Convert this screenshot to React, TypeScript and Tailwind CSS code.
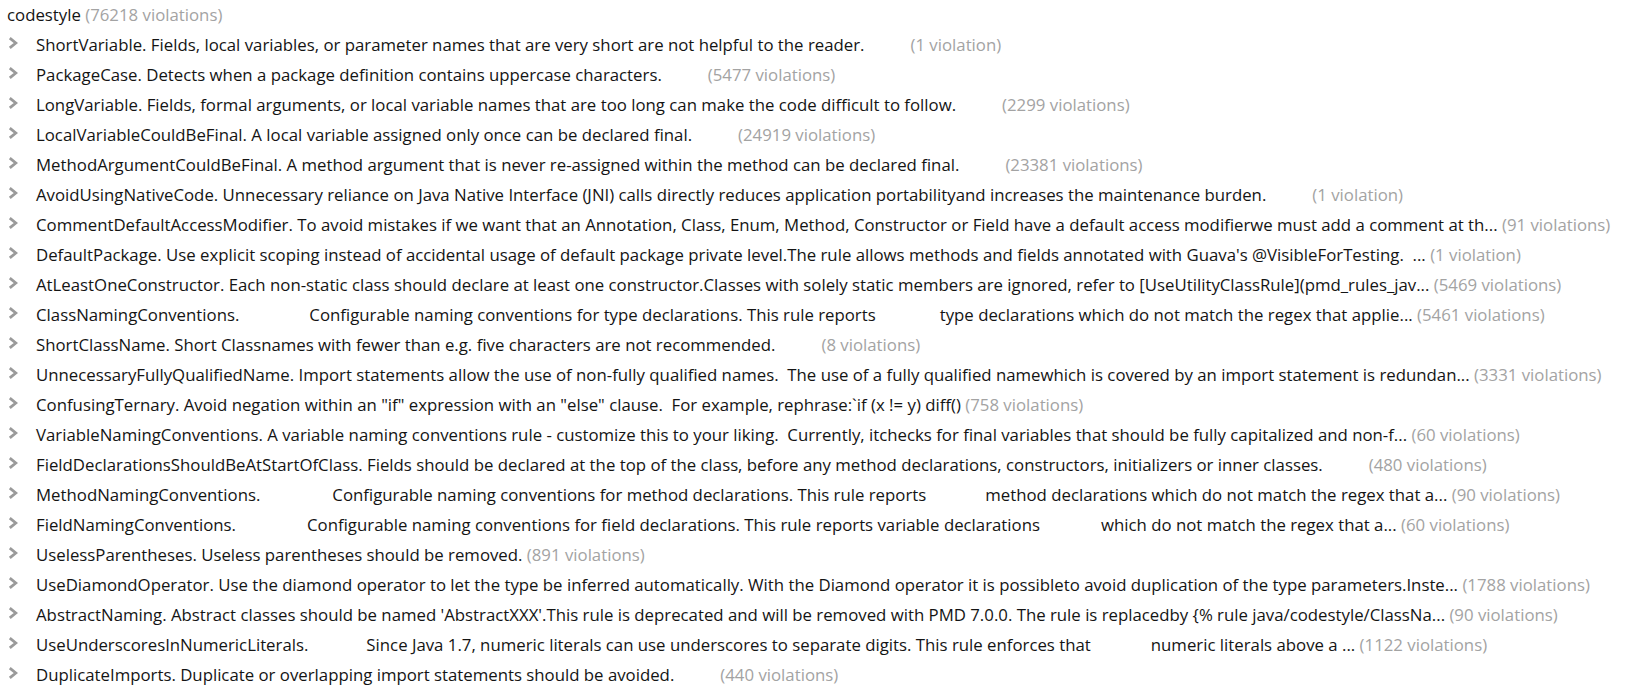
import React from 'react'

// a segment is either text or a pixel gap
type Seg = string | number

interface Rule {
  parts: Seg[]
  count: string
}

const rules: Rule[] = [
  { parts: ['ShortVariable. Fields, local variables, or parameter names that are very short are not helpful to the reader.', 46], count: '(1 violation)' },
  { parts: ['PackageCase. Detects when a package definition contains uppercase characters.', 46], count: '(5477 violations)' },
  { parts: ['LongVariable. Fields, formal arguments, or local variable names that are too long can make the code difficult to follow.', 46], count: '(2299 violations)' },
  { parts: ['LocalVariableCouldBeFinal. A local variable assigned only once can be declared final.', 46], count: '(24919 violations)' },
  { parts: ['MethodArgumentCouldBeFinal. A method argument that is never re-assigned within the method can be declared final.', 46], count: '(23381 violations)' },
  { parts: ['AvoidUsingNativeCode. Unnecessary reliance on Java Native Interface (JNI) calls directly reduces application portabilityand increases the maintenance burden.', 46], count: '(1 violation)' },
  { parts: ['CommentDefaultAccessModifier. To avoid mistakes if we want that an Annotation, Class, Enum, Method, Constructor or Field have a default access modifierwe must add a comment at th... '], count: '(91 violations)' },
  { parts: ["DefaultPackage. Use explicit scoping instead of accidental usage of default package private level.The rule allows methods and fields annotated with Guava's @VisibleForTesting.  ... "], count: '(1 violation)' },
  { parts: ['AtLeastOneConstructor. Each non-static class should declare at least one constructor.Classes with solely static members are ignored, refer to [UseUtilityClassRule](pmd_rules_jav... '], count: '(5469 violations)' },
  { parts: ['ClassNamingConventions.', 70, 'Configurable naming conventions for type declarations. This rule reports', 64, 'type declarations which do not match the regex that applie... '], count: '(5461 violations)' },
  { parts: ['ShortClassName. Short Classnames with fewer than e.g. five characters are not recommended.', 46], count: '(8 violations)' },
  { parts: ['UnnecessaryFullyQualifiedName. Import statements allow the use of non-fully qualified names.  The use of a fully qualified namewhich is covered by an import statement is redundan... '], count: '(3331 violations)' },
  { parts: ['ConfusingTernary. Avoid negation within an "if" expression with an "else" clause.  For example, rephrase:`if (x != y) diff() '], count: '(758 violations)' },
  { parts: ['VariableNamingConventions. A variable naming conventions rule - customize this to your liking.  Currently, itchecks for final variables that should be fully capitalized and non-f... '], count: '(60 violations)' },
  { parts: ['FieldDeclarationsShouldBeAtStartOfClass. Fields should be declared at the top of the class, before any method declarations, constructors, initializers or inner classes.', 46], count: '(480 violations)' },
  { parts: ['MethodNamingConventions.', 72, 'Configurable naming conventions for method declarations. This rule reports', 59, 'method declarations which do not match the regex that a... '], count: '(90 violations)' },
  { parts: ['FieldNamingConventions.', 71, 'Configurable naming conventions for field declarations. This rule reports variable declarations', 61, 'which do not match the regex that a... '], count: '(60 violations)' },
  { parts: ['UselessParentheses. Useless parentheses should be removed. '], count: '(891 violations)' },
  { parts: ['UseDiamondOperator. Use the diamond operator to let the type be inferred automatically. With the Diamond operator it is possibleto avoid duplication of the type parameters.Inste... '], count: '(1788 violations)' },
  { parts: ["AbstractNaming. Abstract classes should be named 'AbstractXXX'.This rule is deprecated and will be removed with PMD 7.0.0. The rule is replacedby {% rule java/codestyle/ClassNa... "], count: '(90 violations)' },
  { parts: ['UseUnderscoresInNumericLiterals.', 58, 'Since Java 1.7, numeric literals can use underscores to separate digits. This rule enforces that', 60, 'numeric literals above a ... '], count: '(1122 violations)' },
  { parts: ['DuplicateImports. Duplicate or overlapping import statements should be avoided.', 46], count: '(440 violations)' },
]

const Chevron = () => (
  <svg width="10" height="12" viewBox="0 0 10 12" className="mt-[7px] shrink-0">
    <path d="M1.8 1.1 L7.8 6 L1.8 10.9" fill="none" stroke="#9a9a9a" strokeWidth="2.8" strokeLinejoin="miter" />
  </svg>
)

function RuleRow({ rule }: { rule: Rule }) {
  return (
    <div className="flex items-start h-[30px] pl-[8px]">
      <Chevron />
      <div className="ml-[18px] leading-[29px] whitespace-pre text-[#141414]">
        {rule.parts.map((p, i) =>
          typeof p === 'number' ? (
            <span key={i} className="inline-block" style={{ width: p }} />
          ) : (
            <span key={i}>{p}</span>
          )
        )}
        <span className="text-[#a3a3a3]">{rule.count}</span>
      </div>
    </div>
  )
}

export default function App() {
  return (
    <div
      className="w-[1650px] h-[696px] overflow-hidden bg-white text-[16.8px]"
      style={{ fontFamily: '"Open Sans", "Noto Sans", sans-serif' }}
    >
      <div className="h-[30px] leading-[29px] pl-[7px] whitespace-pre text-[#141414]">
        codestyle <span className="text-[#a3a3a3]">(76218 violations)</span>
      </div>
      {rules.map((r, i) => (
        <RuleRow key={i} rule={r} />
      ))}
    </div>
  )
}
